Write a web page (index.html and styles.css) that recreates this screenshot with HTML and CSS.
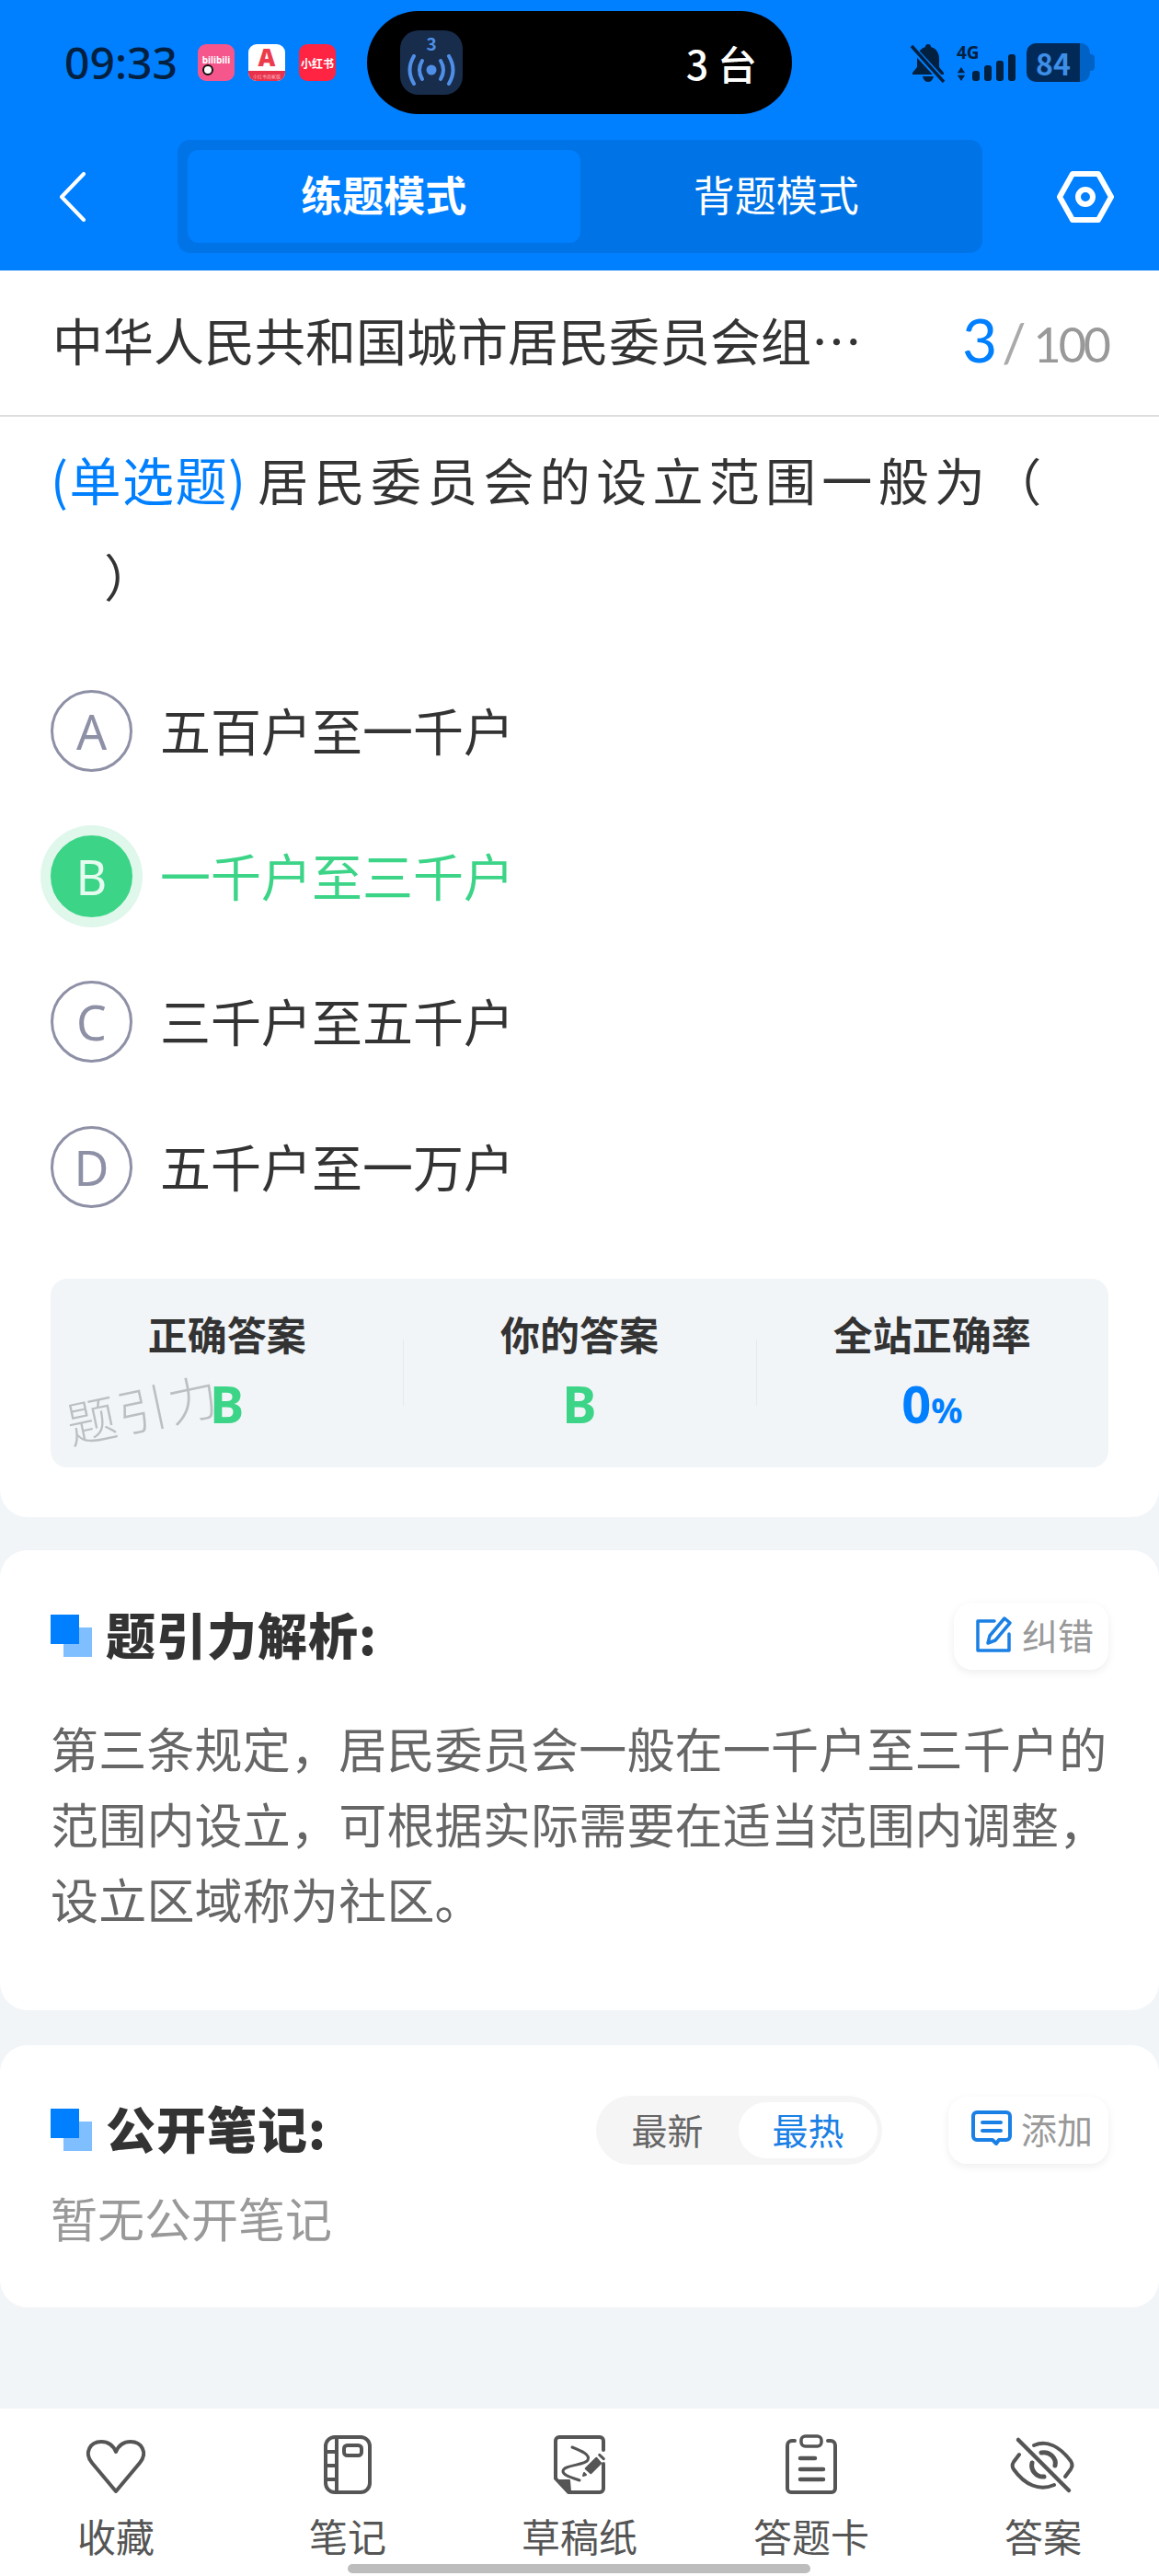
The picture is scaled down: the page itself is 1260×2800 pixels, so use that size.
FILE: index.html
```html
<!DOCTYPE html>
<html lang="zh-CN">
<head>
    <meta charset="UTF-8">
    <meta name="viewport" content="width=device-width, initial-scale=1.0">
    <title>练题模式</title>
    <link rel="stylesheet" href="styles.css">
</head>
<body>
    <header class="top">
        <div class="status">
            <span class="time">09:33</span>
            <div class="apps">
                <span class="app app-bili">bilibili</span>
                <span class="app app-a"><b>A</b><small>小红书商家版</small></span>
                <span class="app app-red">小红书</span>
            </div>
            <div class="island">
                <span class="island-icon">
                    <b>3</b>
                    <svg width="54" height="34" viewBox="0 0 54 34" fill="none" stroke="#4f8fe8" stroke-width="4" stroke-linecap="round">
                        <circle cx="27" cy="17" r="5.5" fill="#4f8fe8" stroke="none"/>
                        <path d="M17 7Q11 17 17 27M37 7Q43 17 37 27"/>
                        <path d="M8 2Q-1 17 8 32M46 2Q55 17 46 32"/>
                    </svg>
                </span>
                <span class="island-text">3 台</span>
            </div>
            <div class="sys">
                <svg width="40" height="44" viewBox="0 0 40 44" fill="#02203f">
                    <path d="M20 2c2 0 3 1 3 3 7 2 9 8 9 13v9l5 6v2H3v-2l5-6V18c0-6 3-11 9-13 0-2 1-3 3-3z"/>
                    <path d="M14 37h12c-1 4-3 6-6 6s-5-2-6-6z"/>
                    <path d="M2 5l34 37" stroke="#007fff" stroke-width="7"/>
                    <path d="M2 4l35 39" stroke="#02203f" stroke-width="3.5"/>
                </svg>
                <div class="signal">
                    <span class="net">4G</span>
                    <div class="bars">
                        <svg width="10" height="15" viewBox="0 0 12 18" fill="#02203f"><path d="M6 0l5 7.500H1zM6 18l-5-7.500h10z"/></svg>
                        <i class="bar bar-1"></i><i class="bar bar-2"></i><i class="bar bar-3"></i><i class="bar bar-4"></i>
                    </div>
                </div>
                <div class="battery"><span class="level">84</span><span class="rest"></span><span class="tip"></span></div>
            </div>
        </div>
        <nav class="nav">
            <svg class="back" width="30" height="54" viewBox="0 0 30 54" fill="none" stroke="#fff" stroke-width="4" stroke-linecap="round" stroke-linejoin="round">
                <path d="M27 2L3 27l24 25"/>
            </svg>
            <div class="modes">
                <span class="mode mode-on">练题模式</span>
                <span class="mode">背题模式</span>
            </div>
            <svg class="gear" width="62" height="56" viewBox="0 0 62 56" fill="none" stroke="#fff" stroke-width="6" stroke-linejoin="round">
                <path d="M17 3h28l14 25-14 25H17L3 28z"/>
                <circle cx="31" cy="28" r="8"/>
            </svg>
        </nav>
    </header>

    <main class="content">
        <section class="card card-question">
            <div class="paper">
                <h1 class="paper-name">中华人民共和国城市居民委员会组…</h1>
                <span class="count"><b>3</b><i>/</i><span class="total">100</span></span>
            </div>
            <p class="question"><span class="tag">(单选题)</span>居民委员会的设立范围一般为（<br><span class="close-paren">）</span></p>
            <ul class="options">
                <li class="option"><span class="letter">A</span><span class="option-text">五百户至一千户</span></li>
                <li class="option option-right"><span class="letter">B</span><span class="option-text">一千户至三千户</span></li>
                <li class="option"><span class="letter">C</span><span class="option-text">三千户至五千户</span></li>
                <li class="option"><span class="letter">D</span><span class="option-text">五千户至一万户</span></li>
            </ul>
            <div class="stats">
                <div class="stat"><h3>正确答案</h3><strong class="green">B</strong></div>
                <div class="stat"><h3>你的答案</h3><strong class="green">B</strong></div>
                <div class="stat"><h3>全站正确率</h3><strong class="blue">0<small>%</small></strong></div>
                <span class="watermark">题引力</span>
            </div>
        </section>

        <section class="card card-analysis">
            <div class="card-head">
                <h2 class="heading"><span class="mark"></span>题引力解析:</h2>
                <button class="tool">
                    <svg width="40" height="40" viewBox="0 0 40 40" fill="none" stroke="#1a80e5" stroke-width="3.500" stroke-linejoin="round" stroke-linecap="round">
                        <path d="M20 6H2v32h34V20"/>
                        <path d="M31 3l6 5-16 19-8 3 2-8z"/>
                    </svg>
                    纠错
                </button>
            </div>
            <p class="analysis">第三条规定，居民委员会一般在一千户至三千户的范围内设立，可根据实际需要在适当范围内调整，设立区域称为社区。</p>
        </section>

        <section class="card card-notes">
            <div class="card-head">
                <h2 class="heading"><span class="mark"></span>公开笔记:</h2>
                <div class="head-right">
                    <div class="sort">
                        <span class="sort-item">最新</span>
                        <span class="sort-item sort-on">最热</span>
                    </div>
                    <button class="tool tool-add">
                        <svg width="44" height="38" viewBox="0 0 44 38" fill="none" stroke="#1a80e5" stroke-width="4" stroke-linejoin="round" stroke-linecap="round">
                            <path d="M6 2h32a4 4 0 0 1 4 4v22a4 4 0 0 1-4 4h-8l-3 4-4-4H6a4 4 0 0 1-4-4V6a4 4 0 0 1 4-4z"/>
                            <path d="M12 13h20M12 22h20"/>
                        </svg>
                        添加
                    </button>
                </div>
            </div>
            <p class="empty">暂无公开笔记</p>
        </section>
    </main>

    <footer class="tabs">
        <div class="tab">
            <svg width="72" height="66" viewBox="0 0 72 66" fill="none" stroke="#555" stroke-width="4" stroke-linejoin="round">
                <path d="M36 62L10 31C1 20 8 8 20 8c8 0 13 4 16 11 3-7 8-11 16-11 12 0 19 12 10 23z"/>
            </svg>
            <span>收藏</span>
        </div>
        <div class="tab">
            <svg width="72" height="66" viewBox="0 0 72 66" fill="none" stroke="#555" stroke-width="4" stroke-linejoin="round">
                <rect x="12" y="3" width="48" height="60" rx="10"/>
                <path d="M24 3v60M12 19h12M12 34h12M12 49h12"/>
                <rect x="32" y="12" width="19" height="11" rx="3.500"/>
            </svg>
            <span>笔记</span>
        </div>
        <div class="tab">
            <svg width="72" height="66" viewBox="0 0 72 66" fill="none" stroke="#555" stroke-width="4" stroke-linejoin="round" stroke-linecap="round">
                <path d="M62 17V7a4 4 0 0 0-4-4H14a4 4 0 0 0-4 4v41l14 15h34a4 4 0 0 0 4-4V32"/>
                <path d="M11 50h14l1 12z" fill="#555" stroke-width="2"/>
                <path d="M28 14C38 18 48 22 45 28C42 34 18 33 18 40C18 45 28 47 36 50" stroke-width="3"/>
                <path d="M42.700 37.300L54.300 25.700L59.300 31.300L48.300 42.300z" fill="#555" stroke-width="2"/>
                <path d="M40 45l1-3 2 2z" fill="#555" stroke-width="2"/>
                <path d="M57.700 22.300L62.300 26.700" stroke-width="3"/>
            </svg>
            <span>草稿纸</span>
        </div>
        <div class="tab">
            <svg width="72" height="66" viewBox="0 0 72 66" fill="none" stroke="#555" stroke-width="4" stroke-linecap="round" stroke-linejoin="round">
                <path d="M18 7h-3a5 5 0 0 0-5 5v47a4 4 0 0 0 4 4h44a4 4 0 0 0 4-4V12a5 5 0 0 0-5-5h-3"/>
                <rect x="25" y="2" width="22" height="11" rx="4.500" stroke-width="3.500"/>
                <path d="M24 26h16M24 38h25M24 49h25" stroke-width="4.500"/>
            </svg>
            <span>答题卡</span>
        </div>
        <div class="tab">
            <svg width="72" height="66" viewBox="0 0 72 66" fill="none" stroke="#555" stroke-width="4" stroke-linecap="round" stroke-linejoin="round">
                <path d="M9 6l55 55" stroke-width="4.500"/>
                <path d="M26 12c14-6 28 1 40 17 2 3 2 6 0 9l-6 8"/>
                <path d="M10 22l-6 8c-2 3-2 5 0 8 12 17 28 24 44 17"/>
                <path d="M34 20c9-2 17 6 15 14M24 31c-2 8 5 16 13 15" stroke-width="5"/>
            </svg>
            <span>答案</span>
        </div>
    </footer>
    <div class="home-bar"></div>
</body>
</html>
```
FILE: styles.css
```css
* {
    box-sizing: border-box;
}

body {
    margin: 0;
    width: 1260px;
    height: 2800px;
    position: relative;
    display: flex;
    flex-direction: column;
    background-color: #f2f5f8;
    color: #333;
    font-family: "Noto Sans CJK SC", "Noto Sans", sans-serif;
    overflow: hidden;
}

h1, h2, h3, p, ul {
    margin: 0;
    padding: 0;
    font-weight: normal;
}

/* top blue area */
.top {
    height: 294px;
    background-color: #007fff;
}

.status {
    height: 152px;
    padding: 12px 0 0 70px;
    display: flex;
    align-items: flex-start;
}

.time {
    width: 145px;
    height: 112px;
    line-height: 112px;
    font-family: "Noto Sans", sans-serif;
    font-size: 48px;
    font-weight: 500;
    color: #02203f;
}

.apps {
    height: 112px;
    width: 184px;
    display: flex;
    align-items: center;
    gap: 15px;
}

.app {
    position: relative;
    width: 40px;
    height: 40px;
    border-radius: 9px;
    display: flex;
    align-items: center;
    justify-content: center;
    text-align: center;
    white-space: nowrap;
}

.app-bili {
    background-color: #f5578d;
    color: #fff;
    font-family: "Noto Sans", sans-serif;
    font-size: 10px;
    font-weight: bold;
    padding-bottom: 6px;
}

.app-bili::after {
    content: "";
    position: absolute;
    left: 5px;
    bottom: 6px;
    width: 8px;
    height: 8px;
    border: 2px solid #111;
    border-radius: 50%;
    background-color: #fff;
}

.app-a {
    flex-direction: column;
    justify-content: flex-start;
    background-color: #fff;
}

.app-a b {
    height: 29px;
    color: #ee3a4d;
    font-family: "Noto Sans", sans-serif;
    font-size: 26px;
    font-weight: 900;
    line-height: 29px;
}

.app-a small {
    width: 100%;
    height: 11px;
    border-radius: 0 0 9px 9px;
    background-color: #e8314a;
    color: #ffb9c2;
    font-size: 5px;
    line-height: 11px;
}

.app-red {
    background-color: #ff2442;
    color: #fff;
    font-size: 12px;
    font-weight: bold;
}

.island {
    width: 462px;
    height: 112px;
    border-radius: 56px;
    background-color: #000;
    padding: 0 38px 0 36px;
    display: flex;
    align-items: center;
    justify-content: space-between;
}

.island-icon {
    width: 68px;
    height: 70px;
    border-radius: 20px;
    background-color: #182d4b;
    display: flex;
    flex-direction: column;
    align-items: center;
    color: #4f8fe8;
}

.island-icon b {
    font-size: 19px;
    line-height: 24px;
    margin-top: 2px;
}

.island-text {
    color: #fff;
    font-size: 43px;
    font-weight: 500;
}

.sys {
    margin-left: 128px;
    height: 112px;
    display: flex;
    align-items: center;
}

.signal {
    margin-left: 11px;
    width: 64px;
}

.net {
    display: block;
    color: #02203f;
    font-family: "Noto Sans", sans-serif;
    font-size: 19px;
    font-weight: bold;
    line-height: 18px;
}

.bars {
    display: flex;
    align-items: flex-end;
    gap: 5px;
    height: 29px;
    margin-top: -7px;
}

.bars svg {
    margin-right: 2px;
}

.bar {
    width: 8px;
    background-color: #02203f;
    border-radius: 3px;
}

.bar-1 { height: 11px; }
.bar-2 { height: 17px; }
.bar-3 { height: 22px; }
.bar-4 { height: 29px; }

.battery {
    margin-left: 12px;
    width: 74px;
    height: 42px;
    display: flex;
    align-items: center;
}

.level {
    width: 58px;
    height: 42px;
    background-color: #022a58;
    border-radius: 10px 0 0 10px;
    color: #3d8fe8;
    font-size: 32px;
    font-weight: bold;
    line-height: 42px;
    text-align: center;
}

.rest {
    width: 11px;
    height: 42px;
    background-color: #0062c4;
    border-radius: 0 10px 10px 0;
}

.tip {
    width: 5px;
    height: 18px;
    background-color: #0062c4;
    border-radius: 0 4px 4px 0;
}

.nav {
    height: 123px;
    display: flex;
    align-items: center;
    padding-left: 64px;
}

.back {
    margin-right: 99px;
}

.modes {
    width: 875px;
    height: 123px;
    padding: 11px;
    border-radius: 14px;
    background-color: #0074e6;
    display: flex;
}

.mode {
    width: 427px;
    line-height: 96px;
    border-radius: 12px;
    text-align: center;
    color: #fff;
    font-size: 45px;
}

.mode-on {
    background-color: #007fff;
    font-weight: bold;
}

.gear {
    margin-left: 81px;
}

/* cards */
.content {
    flex: 1;
    display: flex;
    flex-direction: column;
}

.card {
    background-color: #fff;
    border-radius: 30px;
}

.card-question {
    height: 1355px;
    border-radius: 0 0 30px 30px;
}

.paper {
    height: 159px;
    padding: 0 55px 0 57px;
    border-bottom: 2px solid #dedede;
    display: flex;
    align-items: center;
    justify-content: space-between;
}

.paper-name {
    font-size: 55px;
    line-height: 70px;
    margin-bottom: 9px;
    color: #333;
    white-space: nowrap;
}

.count {
    display: flex;
    align-items: baseline;
    color: #999;
    font-family: "Lato", sans-serif;
    font-size: 52px;
    line-height: 70px;
    margin-bottom: 3px;
}

.count b {
    color: #007fff;
    font-size: 66px;
    font-weight: normal;
}

.count i {
    font-style: normal;
    font-size: 58px;
    margin: 0 8px 0 5px;
    color: #aaa;
}

.total {
    letter-spacing: -3px;
}

.question {
    padding: 15px 55px 0 55px;
    font-size: 55px;
    line-height: 104px;
    letter-spacing: 6.3px;
    height: 262px;
    white-space: nowrap;
}

.tag {
    color: #007fff;
    font-size: 56px;
    letter-spacing: 1.5px;
    margin-right: 12px;
}

.close-paren {
    margin-left: 58px;
}

.options {
    list-style: none;
}

.option {
    height: 158px;
    padding-left: 55px;
    display: flex;
    align-items: center;
    font-size: 55px;
}

.option-text {
    margin-bottom: 5px;
}

.letter {
    width: 89px;
    height: 89px;
    margin-right: 30px;
    border: 3px solid #8e90a6;
    border-radius: 50%;
    color: #8e90a6;
    font-size: 52px;
    font-family: "Noto Sans", sans-serif;
    display: flex;
    align-items: center;
    justify-content: center;
}

.option-right {
    color: #3cd487;
}

.option-right .letter {
    background-color: #3cd487;
    border-color: #3cd487;
    box-shadow: 0 0 0 11px #e0f7ec;
    color: #e6fbf0;
}

.stats {
    position: relative;
    margin: 43px 55px 0;
    height: 205px;
    padding-top: 29px;
    border-radius: 18px;
    background-color: #f2f5f8;
    display: flex;
    align-items: flex-start;
}

.stat {
    flex: 1;
    text-align: center;
    position: relative;
}

.stat + .stat::before {
    content: "";
    position: absolute;
    left: 0;
    top: 37px;
    height: 72px;
    border-left: 1px solid #e6e9ed;
}

.stat h3 {
    font-size: 43px;
    font-weight: bold;
    line-height: 60px;
}

.stat strong {
    display: block;
    font-size: 56px;
    font-family: "Noto Sans", sans-serif;
    line-height: 76px;
    margin-top: 8px;
}

.stat small {
    font-size: 38px;
}

.green {
    color: #3cd487;
}

.blue {
    color: #007fff;
}

.watermark {
    position: absolute;
    left: 16px;
    top: 105px;
    font-size: 54px;
    line-height: 70px;
    color: #bcbfc2;
    font-weight: 300;
    letter-spacing: 2px;
    transform: rotate(-12deg);
}

.card-analysis {
    height: 500px;
    margin-top: 36px;
    padding: 56px 55px 0;
}

.card-notes {
    height: 285px;
    margin-top: 38px;
    padding: 55px 55px 0;
}

.card-head {
    height: 75px;
    display: flex;
    align-items: center;
    justify-content: space-between;
}

.heading {
    position: relative;
    padding: 0 0 6px 60px;
    font-size: 54px;
    font-weight: 900;
    letter-spacing: 1px;
    color: #333;
    line-height: 69px;
}

.mark {
    position: absolute;
    left: 0;
    top: 14px;
    width: 31px;
    height: 32px;
    background-color: #007fff;
    box-shadow: 14px 14px 0 0 #80bfff;
}

.tool {
    height: 73px;
    padding: 0 16px 5px 24px;
    border: none;
    border-radius: 20px;
    background-color: #fff;
    box-shadow: 0 3px 10px rgba(0, 0, 0, 0.07);
    display: flex;
    align-items: center;
    gap: 10px;
    color: #999;
    font-family: inherit;
    font-size: 39px;
}

.tool-add {
    padding-left: 25px;
    padding-right: 17px;
}

.analysis {
    margin-top: 43px;
    font-size: 52px;
    letter-spacing: 0.2px;
    line-height: 82px;
    color: #666;
}

.head-right {
    display: flex;
    align-items: center;
    gap: 72px;
}

.sort {
    width: 311px;
    height: 75px;
    padding: 7px 5px 7px 0;
    border-radius: 38px;
    background-color: #f5f5f5;
    display: flex;
    justify-content: space-between;
}

.sort-item {
    width: 155px;
    line-height: 58px;
    border-radius: 31px;
    text-align: center;
    font-size: 39px;
    color: #666;
}

.sort-on {
    width: 151px;
    background-color: #fff;
    color: #1a80e5;
}

.empty {
    margin-top: 16px;
    font-size: 51px;
    line-height: 82px;
    color: #999;
}

/* bottom tabs */
.tabs {
    height: 182px;
    padding-top: 28px;
    background-color: #fff;
    display: flex;
}

.tab {
    width: 252px;
    display: flex;
    flex-direction: column;
    align-items: center;
    color: #555;
    font-size: 42px;
    line-height: 60px;
}

.tab svg {
    display: block;
    margin-bottom: 14px;
}

.home-bar {
    position: absolute;
    left: 378px;
    top: 2787px;
    width: 503px;
    height: 10px;
    border-radius: 5px;
    background-color: #bdbdbd;
}
```
